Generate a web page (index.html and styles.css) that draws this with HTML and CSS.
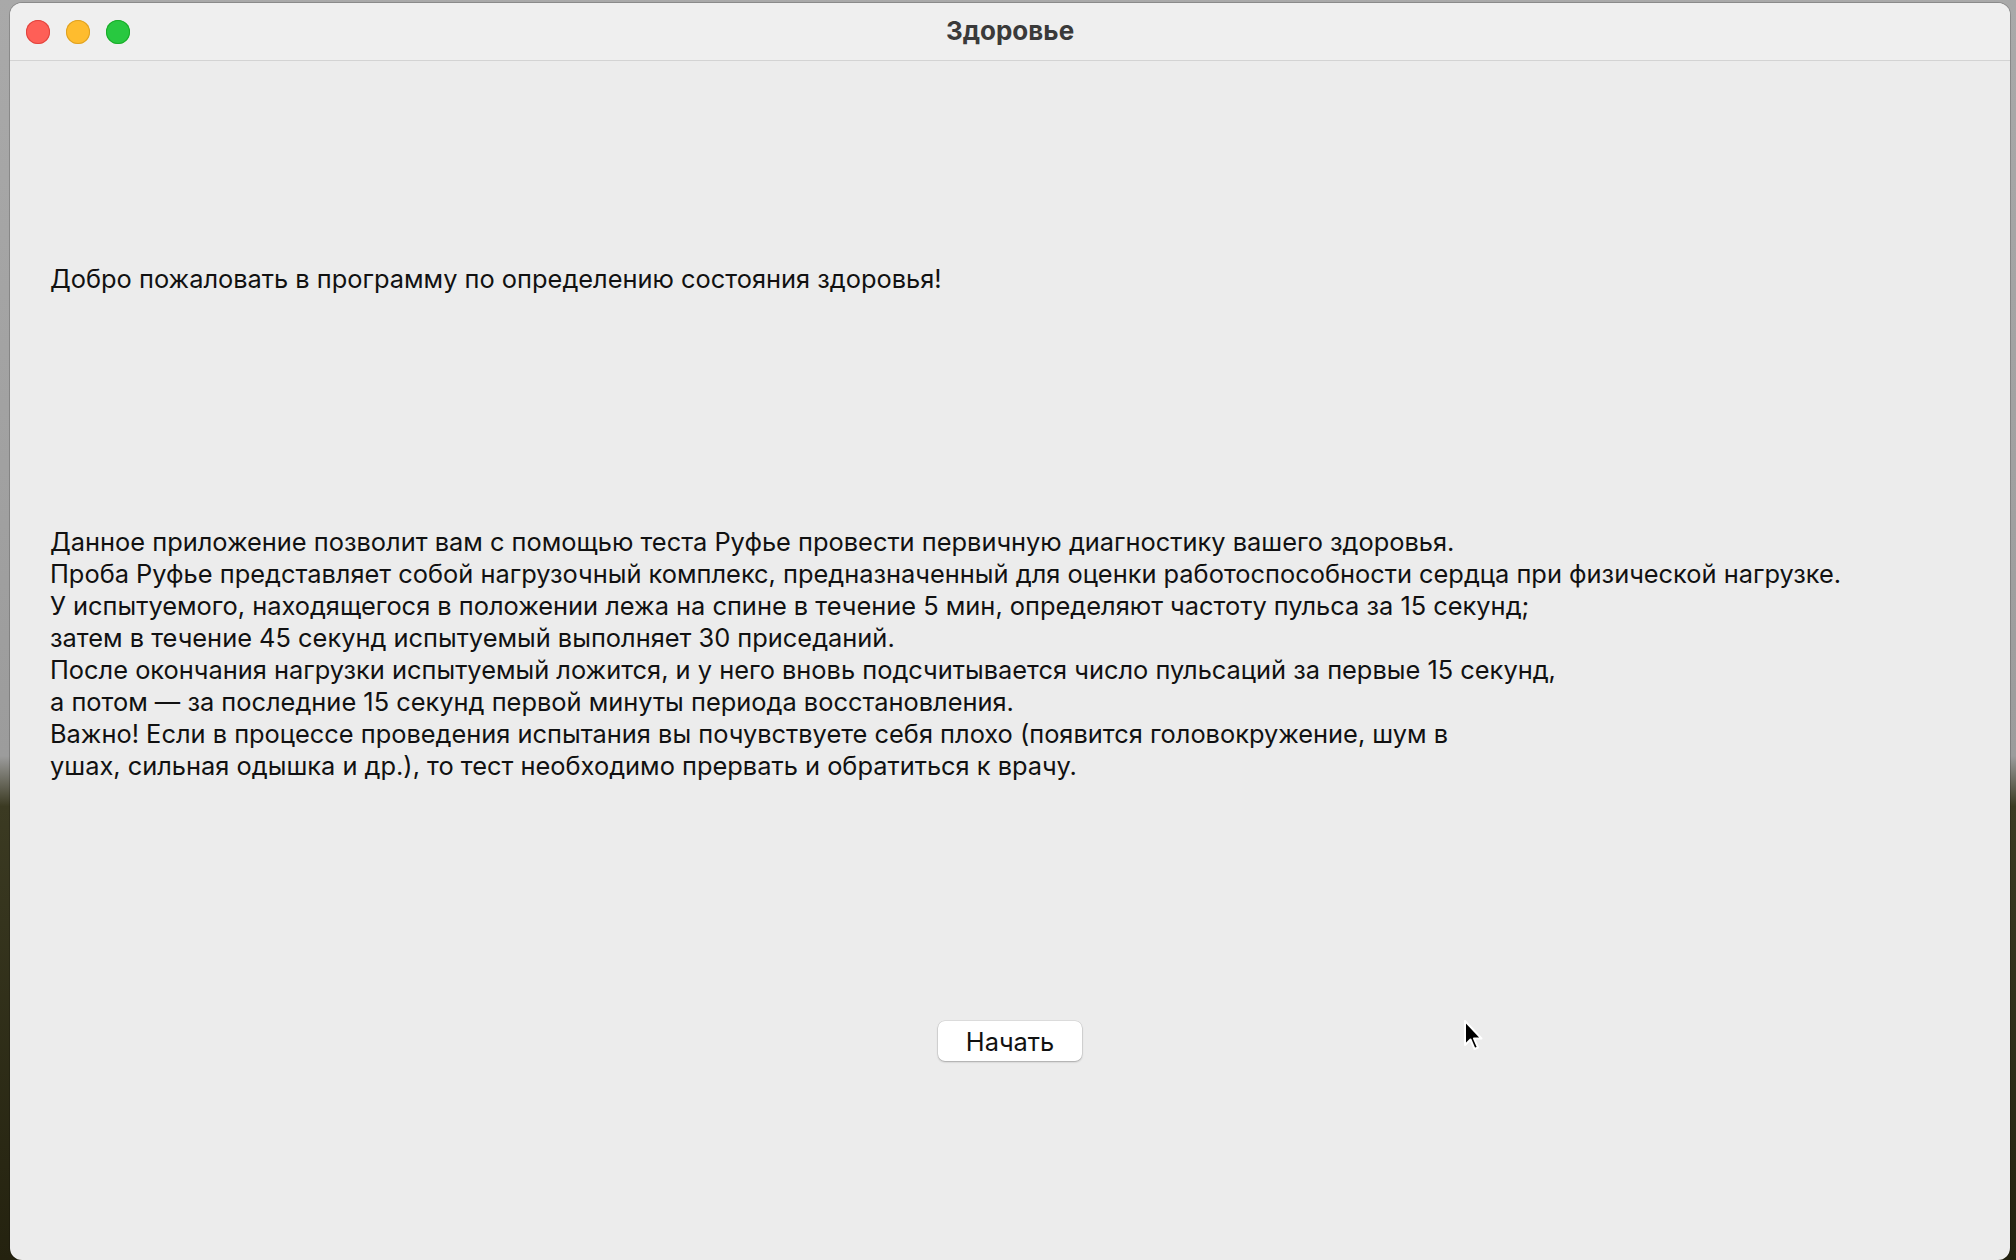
FILE: index.html
```html
<!DOCTYPE html>
<html lang="ru">
<head>
<meta charset="utf-8">
<title>Здоровье</title>
<link rel="stylesheet" href="styles.css">
</head>
<body>
<div class="desktop">
  <div class="window">
    <header class="titlebar">
      <div class="lights">
        <span class="light red"></span>
        <span class="light yellow"></span>
        <span class="light green"></span>
      </div>
      <div class="title">Здоровье</div>
    </header>
    <main class="content">
      <p class="welcome">Добро пожаловать в программу по определению состояния здоровья!</p>
      <p class="info">Данное приложение позволит вам с помощью теста Руфье провести первичную диагностику вашего здоровья.<br>
Проба Руфье представляет собой нагрузочный комплекс, предназначенный для оценки работоспособности сердца при физической нагрузке.<br>
У испытуемого, находящегося в положении лежа на спине в течение 5 мин, определяют частоту пульса за 15 секунд;<br>
затем в течение 45 секунд испытуемый выполняет 30 приседаний.<br>
После окончания нагрузки испытуемый ложится, и у него вновь подсчитывается число пульсаций за первые 15 секунд,<br>
а потом — за последние 15 секунд первой минуты периода восстановления.<br>
Важно! Если в процессе проведения испытания вы почувствуете себя плохо (появится головокружение, шум в<br>
ушах, сильная одышка и др.), то тест необходимо прервать и обратиться к врачу.</p>
      <div class="actions">
        <button class="btn" type="button">Начать</button>
      </div>
    </main>
    <svg class="cursor" width="22" height="34" viewBox="0 0 22 34">
      <path d="M2 2 L2 26 L7.5 20.5 L11.5 30 L15 28.5 L11 19.5 L18.5 19.5 Z" fill="#000" stroke="#fff" stroke-width="2" stroke-linejoin="round"/>
    </svg>
  </div>
</div>
</body>
</html>
```
FILE: styles.css
```css
* { box-sizing: border-box; }
html, body { margin: 0; padding: 0; }
body {
  width: 2016px;
  height: 1260px;
  overflow: hidden;
  font-family: Inter, "Liberation Sans", sans-serif;
}
.desktop {
  width: 2016px;
  height: 1260px;
  background: linear-gradient(180deg, #a9a9a9 0%, #9c9c9c 60%, #3b3a22 64%, #24220f 100%);
  padding: 3px 6px 0 10px;
}
.window {
  position: relative;
  height: 1257px;
  background: #ececec;
  border-radius: 12px;
  box-shadow: 0 0 0 1px rgba(0,0,0,0.18);
  display: flex;
  flex-direction: column;
  overflow: hidden;
}
.titlebar {
  position: relative;
  height: 58px;
  flex: none;
  background: #efefef;
  border-bottom: 1px solid #d3d3d3;
  display: flex;
  align-items: center;
  justify-content: center;
}
.lights {
  position: absolute;
  left: 16px;
  top: 17px;
  display: flex;
  gap: 16px;
}
.light {
  width: 24px;
  height: 24px;
  border-radius: 50%;
  display: block;
}
.red { background: #fe5f57; box-shadow: inset 0 0 0 1px #e0443e; }
.yellow { background: #febc2e; box-shadow: inset 0 0 0 1px #dea123; }
.green { background: #28c840; box-shadow: inset 0 0 0 1px #1aab29; }
.title {
  font-size: 26px;
  font-weight: 700;
  color: #3a3a3a;
  margin-top: -3px;
}
.content {
  flex: 1;
  padding: 0 40px;
  display: flex;
  flex-direction: column;
  color: #111111;
  font-size: 25.4px;
  line-height: 32px;
}
.welcome {
  margin: 202px 0 0;
}
.info {
  margin: 231px 0 0;
}
.actions {
  margin-top: 239px;
  display: flex;
  justify-content: center;
}
.btn {
  width: 144px;
  height: 40px;
  border: none;
  border-radius: 7px;
  background: #ffffff;
  box-shadow: 0 1px 2px rgba(0,0,0,0.25), 0 0 0 0.5px rgba(0,0,0,0.12);
  font-family: Inter, "Liberation Sans", sans-serif;
  font-size: 25.4px;
  color: #111111;
  padding: 0;
}
.cursor {
  position: absolute;
  left: 1453px;
  top: 1016px;
}
```
